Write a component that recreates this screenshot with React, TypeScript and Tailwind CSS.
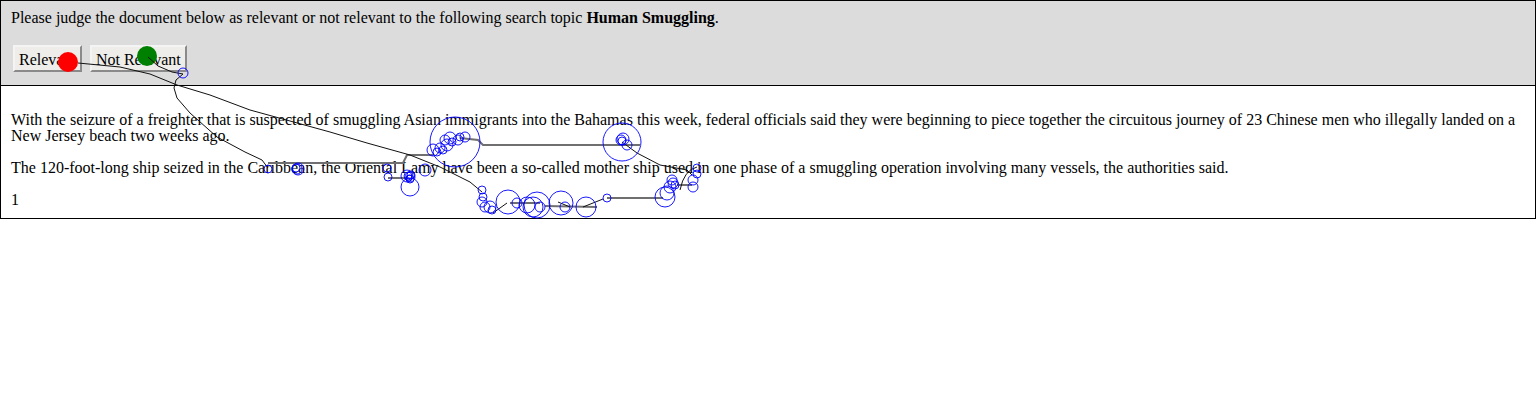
// relevance judgement page with a gaze-plot overlay
type Pt = [number, number];

const fixations: [number, number, number][] = [
  [183, 73, 5],
  [268, 169, 4],
  [296, 168, 4],
  [297, 169, 5],
  [298, 169, 6],
  [387, 168, 4],
  [388, 177, 4],
  [407, 176, 6],
  [408, 176, 4],
  [410, 177, 5],
  [409, 178, 3],
  [411, 175, 4],
  [410, 179, 4],
  [410, 187, 9],
  [425, 170, 6],
  [433, 150, 6],
  [437, 152, 4],
  [440, 148, 5],
  [455, 142, 25],
  [443, 150, 4],
  [445, 140, 5],
  [447, 145, 6],
  [450, 138, 6],
  [452, 142, 4],
  [458, 140, 5],
  [460, 137, 4],
  [465, 137, 5],
  [622, 142, 19],
  [621, 140, 5],
  [622, 141, 4],
  [623, 139, 6],
  [627, 145, 5],
  [672, 180, 5],
  [673, 183, 5],
  [670, 187, 6],
  [675, 185, 4],
  [667, 193, 7],
  [665, 197, 10],
  [693, 180, 5],
  [693, 187, 5],
  [697, 174, 4],
  [697, 168, 4],
  [607, 198, 4],
  [482, 190, 4],
  [483, 197, 4],
  [482, 202, 5],
  [485, 207, 5],
  [490, 207, 6],
  [492, 210, 4],
  [508, 202, 12],
  [517, 203, 5],
  [527, 205, 8],
  [533, 207, 10],
  [537, 205, 13],
  [540, 207, 5],
  [561, 203, 12],
  [565, 207, 5],
  [586, 207, 10],
];

const saccades: Pt[][] = [
  [[268, 163], [403, 163], [407, 155], [433, 155]],
  [[388, 178], [408, 178]],
  [[460, 138], [478, 140], [483, 145], [640, 145]],
  [[677, 185], [692, 185]],
  [[607, 198], [663, 198]],
  [[510, 203], [540, 203]],
  [[545, 206], [597, 207]],
];

const mouse: Pt[][] = [
  [[78, 63], [120, 67], [150, 74], [177, 85], [210, 95], [250, 110], [290, 121], [330, 132], [367, 143], [410, 155], [440, 167], [470, 182], [482, 192]],
  [[148, 57], [158, 66], [172, 72], [183, 74]],
  [[183, 74], [176, 80], [174, 88], [177, 98], [190, 113], [217, 137], [245, 152], [262, 160], [268, 168]],
  [[622, 142], [637, 153], [660, 165], [687, 170], [692, 175]],
  [[603, 199], [583, 207]],
  [[507, 203], [493, 213]],
  [[558, 202], [570, 207]],
];

const pts = (p: Pt[]) => p.map(([x, y]) => `${x},${y}`).join(" ");

function GazePlot() {
  return (
    <svg
      className="pointer-events-none absolute left-0 top-0"
      width={1536}
      height={220}
      viewBox="0 0 1536 220"
    >
      <circle cx={68} cy={62} r={10} fill="#ff0000" />
      <circle cx={147} cy={56} r={10} fill="#008000" />
      {saccades.map((s, i) => (
        <polyline key={i} points={pts(s)} fill="none" stroke="#6f6f6f" strokeWidth={2} />
      ))}
      {mouse.map((m, i) => (
        <polyline
          key={i}
          points={pts(m)}
          fill="none"
          stroke="#111"
          strokeWidth={1}
          strokeLinejoin="round"
        />
      ))}
      <path d="M680 190 Q684 170 697 167" fill="none" stroke="#111" strokeWidth={1} />
      {fixations.map(([x, y, r], i) => (
        <circle key={i} cx={x} cy={y} r={r} fill="none" stroke="#0000ff" strokeOpacity={0.9} />
      ))}
    </svg>
  );
}

export default function App() {
  return (
    <div className="relative font-['Liberation_Serif',serif] text-[16px] leading-[16px] text-black">
      <div className="border border-black bg-[#dcdcdc] px-[10px] pb-[13px] pt-[9px]">
        <p>
          Please judge the document below as relevant or not relevant to the following search topic{" "}
          <b>Human Smuggling</b>.
        </p>

        <div className="ml-[2px] mt-[19px] flex gap-[8px]">
          <button className="flex h-[27px] items-center border-2 border-b-[#8a8a8a] border-l-[#f4f4f4] border-r-[#8a8a8a] border-t-[#f4f4f4] bg-[#eeede9] px-[4px] pt-[2px]">
            Relevant
          </button>
          <button className="flex h-[27px] items-center border-2 border-b-[#8a8a8a] border-l-[#f4f4f4] border-r-[#8a8a8a] border-t-[#f4f4f4] bg-[#eeede9] px-[4px] pt-[2px]">
            Not Relevant
          </button>
        </div>
      </div>

      <div className="border border-t-0 border-black px-[10px] pb-[10px] pt-[26px]">
        <p className="mb-[16px]">
          With the seizure of a freighter that is suspected of smuggling Asian immigrants into the Bahamas this
          week, federal officials said they were beginning to piece together the circuitous journey of 23 Chinese
          men who illegally landed on a New Jersey beach two weeks ago.
        </p>
        <p className="mb-[16px]">
          The 120-foot-long ship seized in the Caribbean, the Oriental Lamy have been a so-called mother ship used
          in one phase of a smuggling operation involving many vessels, the authorities said.
        </p>
        <p>1</p>
      </div>

      <GazePlot />
    </div>
  );
}
